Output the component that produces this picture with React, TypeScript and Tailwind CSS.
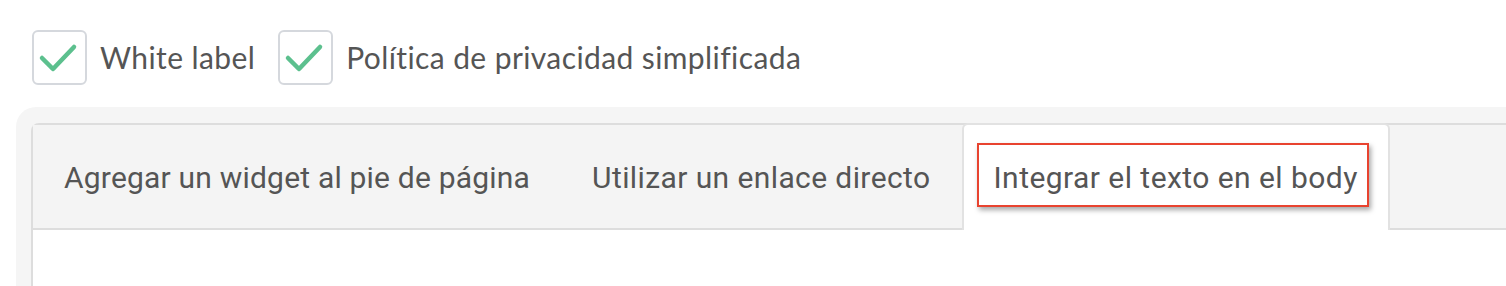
import React from "react";

const CheckBox = ({ label }: { label: string }) => (
  <label className="flex items-center gap-[13px]">
    <span className="flex h-[55px] w-[55px] items-center justify-center rounded-[6px] border-2 border-[#d5d8dd] bg-white">
      <svg width="55" height="55" viewBox="0 0 55 55" className="shrink-0">
        <polyline
          points="10,28 21,39 42,17"
          fill="none"
          stroke="#5cc08e"
          strokeWidth="4.5"
          strokeLinecap="round"
          strokeLinejoin="round"
        />
      </svg>
    </span>
    <span
      className="text-[30px] tracking-[0.4px] text-[#555555]"
      style={{ fontFamily: "Lato, sans-serif" }}
    >
      {label}
    </span>
  </label>
);

const tabs = ["Agregar un widget al pie de página", "Utilizar un enlace directo", "Integrar el texto en el body"];

export default function App() {
  return (
    <div className="h-[286px] overflow-hidden bg-white">
      <div className="flex gap-[23px] pl-8 pt-[30px]">
        <CheckBox label="White label" />
        <CheckBox label="Política de privacidad simplificada" />
      </div>
      <div className="ml-4 mt-[22px] h-[200px] rounded-tl-[20px] bg-[#f5f5f5] pl-[15px] pt-4">
        <div className="h-full rounded-tl-[8px] border-l-2 border-t-2 border-[#dddddd] bg-white">
          <div
            className="flex h-[105px] items-end border-b-2 border-[#dddddd] bg-[#f4f4f4]"
            style={{ fontFamily: "Roboto, sans-serif" }}
          >
            {tabs.map((t, i) =>
              i === 2 ? (
                <div
                  key={t}
                  className="relative -mb-[2px] flex h-[107px] items-center rounded-t-[6px] border-x-2 border-t-2 border-[#e2e2e2] bg-white px-[30px] text-[30px] tracking-[0.45px] text-[#555555]"
                >
                  {t}
                  <span className="pointer-events-none absolute left-[13px] top-[18px] h-[64px] w-[392px] border-2 border-[#e8432f] shadow-[2px_3px_5px_rgba(0,0,0,0.35)]" />
                </div>
              ) : (
                <div
                  key={t}
                  className={`flex h-[103px] items-center px-[31px] pt-[2px] text-[30px] text-[#555555] ${
                    i === 0 ? "tracking-[0.2px]" : "tracking-[0.4px]"
                  }`}
                >
                  {t}
                </div>
              )
            )}
          </div>
        </div>
      </div>
    </div>
  );
}
